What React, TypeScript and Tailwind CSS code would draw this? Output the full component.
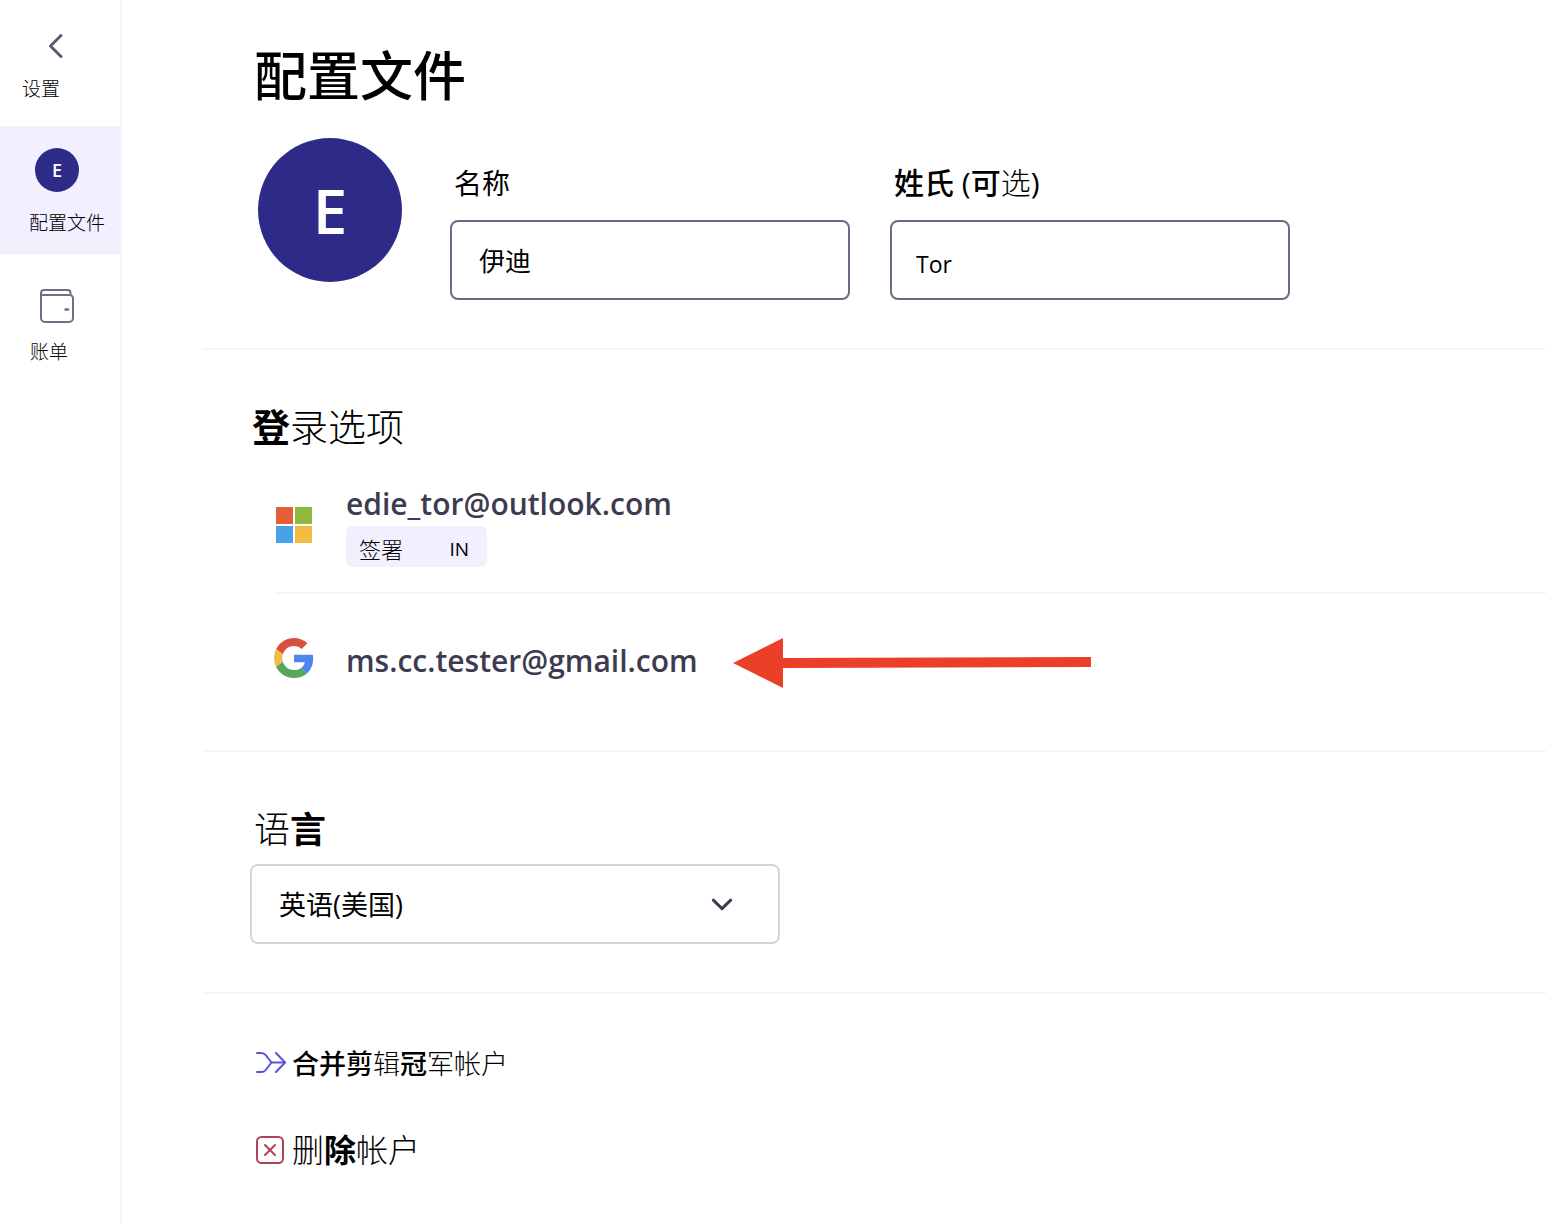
import React from 'react';

const ChevronLeft = () => (
  <svg width="16" height="26" viewBox="0 0 16 26" fill="none" stroke="#5c5a70" strokeWidth="3" strokeLinecap="round" strokeLinejoin="round" aria-hidden="true">
    <path d="M13 2.5 2.5 13 13 23.5" />
  </svg>
);

const ChevronDown = () => (
  <svg width="22" height="14" viewBox="0 0 22 14" fill="none" stroke="#3d3b50" strokeWidth="3" strokeLinecap="round" strokeLinejoin="round" aria-hidden="true">
    <path d="M2.3 3.2 11 11.6l8.7-8.4" />
  </svg>
);

const WalletIcon = () => (
  <svg width="34" height="34" viewBox="0 0 34 34" fill="none" stroke="#706e87" strokeWidth="2" strokeLinecap="round" strokeLinejoin="round" aria-hidden="true">
    <path d="M1 6V29a4 4 0 0 0 4 4H29a4 4 0 0 0 4-4V9.5a3.5 3.5 0 0 0-3.5-3.5H1V4a3 3 0 0 1 3-3H27.5a3 3 0 0 1 3 3V6" />
    <path d="M25.5 20.5h2.5" strokeWidth="2.4" />
  </svg>
);

const MicrosoftLogo = () => (
  <svg width="36" height="36" viewBox="0 0 36 36" aria-hidden="true">
    <path fill="#e35f38" d="M0 0h17v17H0z" />
    <path fill="#8fb83d" d="M19 0h17v17H19z" />
    <path fill="#48a2ea" d="M0 19h17v17H0z" />
    <path fill="#f4bb42" d="M19 19h17v17H19z" />
  </svg>
);

const GoogleLogo = () => (
  <svg width="40" height="40" viewBox="0 0 48 48" aria-hidden="true">
    <path fill="#d85140" d="M24 9.5c3.54 0 6.71 1.22 9.21 3.6l6.85-6.85C35.9 2.38 30.47 0 24 0 14.62 0 6.51 5.38 2.56 13.22l7.98 6.19C12.43 13.72 17.74 9.5 24 9.5z" />
    <path fill="#5086ec" d="M46.98 24.55c0-1.57-.15-3.09-.38-4.55H24v9.02h12.94c-.58 2.96-2.26 5.48-4.78 7.18l7.73 6c4.51-4.18 7.09-10.36 7.09-17.65z" />
    <path fill="#f1bd42" d="M10.53 28.59c-.48-1.45-.76-2.99-.76-4.59s.27-3.14.76-4.59l-7.98-6.19C.92 16.46 0 20.12 0 24c0 3.88.92 7.54 2.56 10.78l7.97-6.19z" />
    <path fill="#58a55c" d="M24 48c6.48 0 11.93-2.13 15.89-5.81l-7.73-6c-2.15 1.45-4.92 2.3-8.16 2.3-6.26 0-11.57-4.22-13.47-9.91l-7.98 6.19C6.51 42.62 14.62 48 24 48z" />
  </svg>
);

const ArrowLeft = () => (
  <svg width="358" height="54" viewBox="0 -4 358 54" fill="#eb4027" aria-hidden="true">
    <path d="M0 25 50 0v20l308-1v10l-308 1v20z" />
  </svg>
);

const MergeIcon = () => (
  <svg width="31" height="24" viewBox="0 0 31 24" fill="none" stroke="#5b54d6" strokeWidth="2" strokeLinecap="round" strokeLinejoin="round" aria-hidden="true">
    <path d="M1 1h4.5c2 0 3.2.9 4.3 2.2L15.500 10.500H29" />
    <path d="M1 20h4.500c2 0 3.200-.9 4.300-2.200L15.500 10.500" />
    <path d="M20 1l9 9.500L20 20" />
  </svg>
);

const DeleteIcon = () => (
  <svg width="28" height="28" viewBox="0 0 28 28" fill="none" stroke="#b5405a" strokeWidth="2" strokeLinecap="round" aria-hidden="true">
    <rect x="1" y="1" width="26" height="26" rx="4.5" />
    <path d="m9 9 10 10M19 9 9 19" />
  </svg>
);

const Thin: React.FC<{ children: React.ReactNode }> = ({ children }) => (
  <span className="font-light">{children}</span>
);

const Sidebar = () => (
  <nav className="w-[122px] shrink-0 border-r-2 border-[#f5f4fb] text-[19px] leading-7 font-light">
    <a href="#settings" className="flex h-[126px] flex-col pt-[33px]">
      <span className="ml-12">
        <ChevronLeft />
      </span>
      <span className="mt-4 ml-[22px]">设置</span>
    </a>
    <a href="#profile" aria-current="page" className="flex h-32 flex-col bg-[#f2effe] pt-[22px]">
      <span className="ml-[35px] flex size-11 items-center justify-center rounded-full bg-[#2e2a87] text-lg font-semibold text-white">
        E
      </span>
      <span className="mt-[17px] ml-[29px]">配置文件</span>
    </a>
    <a href="#billing" className="flex h-32 flex-col pt-[35px]">
      <span className="ml-10">
        <WalletIcon />
      </span>
      <span className="mt-[15px] ml-[30px]">账单</span>
    </a>
  </nav>
);

const ProfileSection = () => (
  <section className="pt-12 pb-12 pl-[52px]">
    <h1 className="h-[60px] text-[53px] leading-[56px] font-medium">配置文件</h1>
    <div className="mt-[30px] ml-1 flex">
      <div className="flex size-36 shrink-0 items-center justify-center rounded-full bg-[#2e2a87] text-[62px] font-semibold text-white">
        E
      </div>
      <div className="ml-12 flex flex-1 gap-10 pt-6">
        <div className="w-[400px]">
          <label htmlFor="first-name" className="mb-4 ml-1 block h-[42px] text-[28px] leading-[42px]">
            名称
          </label>
          <input
            id="first-name"
            defaultValue="伊迪"
            className="h-20 w-full rounded-lg border-2 border-[#6d6b83] pl-[27px] text-[26px]"
          />
        </div>
        <div className="w-[400px]">
          <label htmlFor="last-name" className="mb-4 ml-1 block h-[42px] text-[30px] leading-[42px] font-medium">
            姓氏 <span className="font-normal">(</span>可<Thin>选</Thin>
            <span className="font-normal">)</span>
          </label>
          <input
            id="last-name"
            defaultValue="Tor"
            className="h-20 w-full rounded-lg border-2 border-[#6d6b83] pt-2 pl-6 text-[23px]"
          />
        </div>
      </div>
    </div>
  </section>
);

const LoginSection = () => (
  <section className="border-t-2 border-[#f5f4fb] pt-12">
    <h2 className="mb-7 h-14 pl-[50px] text-[38px] leading-[56px] font-bold">
      登<Thin>录选项</Thin>
    </h2>
    <ul className="ml-[72px] text-[30px] leading-[44px] font-semibold text-[#3d3b50]">
      <li className="flex items-center border-b-2 border-[#f5f4fb] pb-[25px]">
        <span className="w-[72px] pl-0.5">
          <MicrosoftLogo />
        </span>
        <div>
          <div>edie_tor@outlook.com</div>
          <div className="flex h-[41px] w-[141px] items-center justify-between rounded-md bg-[#f2effe] pt-1 pr-[18px] pl-[13px] text-[22px] font-light text-black">
            签署 <span className="text-[19px] font-normal">IN</span>
          </div>
        </div>
      </li>
      <li className="flex items-center pt-10 pb-[62px]">
        <span className="w-[72px] self-start pt-1">
          <GoogleLogo />
        </span>
        <span className="w-[387px]">ms.cc.tester@gmail.com</span>
        <ArrowLeft />
      </li>
    </ul>
  </section>
);

const LanguageSection = () => (
  <section className="border-t-2 border-[#f5f4fb] pt-12 pb-12 pl-12">
    <label htmlFor="language" className="mb-1 ml-1 block h-[60px] text-[36px] leading-[60px] font-bold">
      <Thin>语</Thin>言
    </label>
    <div className="relative w-[530px]">
      <select
        id="language"
        className="h-20 w-full appearance-none rounded-lg border-2 border-[#d5d3e0] bg-white pt-0.5 pl-[27px] text-[27px]"
      >
        <option>英语(美国)</option>
      </select>
      <span className="pointer-events-none absolute inset-y-0 right-[47px] flex items-center">
        <ChevronDown />
      </span>
    </div>
  </section>
);

const AccountSection = () => (
  <section className="flex flex-col items-start gap-[42px] border-t-2 border-[#f5f4fb] pt-12 pb-12 pl-[54px]">
    <button className="flex h-11 items-center text-[27px] leading-[44px] font-medium">
      <span className="w-9">
        <MergeIcon />
      </span>
      <span>
        合并剪<Thin>辑</Thin>冠<Thin>军帐户</Thin>
      </span>
    </button>
    <button className="flex h-11 items-center text-[32px] leading-[44px] font-bold">
      <span className="w-9">
        <DeleteIcon />
      </span>
      <span>
        <Thin>删</Thin>除<Thin>帐户</Thin>
      </span>
    </button>
  </section>
);

const App: React.FC = () => (
  <div
    lang="zh-CN"
    className="flex min-h-screen bg-white font-['Open_Sans','Noto_Sans_CJK_SC',sans-serif] text-black [&_svg]:block [&_svg]:shrink-0"
  >
    <Sidebar />
    <main className="min-w-0 flex-1 pl-20">
      <ProfileSection />
      <LoginSection />
      <LanguageSection />
      <AccountSection />
    </main>
  </div>
);

export default App;
